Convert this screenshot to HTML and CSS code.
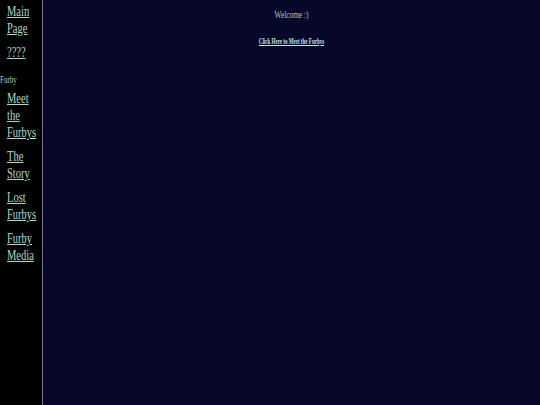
FILE: index.html
```html
<!DOCTYPE html>
<html>
<head>
<meta charset="utf-8">
<title>Furby</title>
<link rel="stylesheet" href="styles.css">
</head>
<body>
<div class="page">
  <nav class="sidebar">
    <a class="nav-link" href="#">Main Page</a>
    <a class="nav-link" href="#">????</a>
    <div class="nav-label">Furby</div>
    <a class="nav-link" href="#">Meet the Furbys</a>
    <a class="nav-link" href="#">The Story</a>
    <a class="nav-link" href="#">Lost Furbys</a>
    <a class="nav-link" href="#">Furby Media</a>
  </nav>
  <main class="content">
    <p class="welcome">Welcome :)</p>
    <p class="cta-row"><a class="cta" href="#">Click Here to Meet the Furbys</a></p>
  </main>
</div>
</body>
</html>
```

FILE: styles.css
```css
html, body {
  margin: 0;
  padding: 0;
  background: #07072a;
  overflow: hidden;
}

body {
  width: 540px;
  height: 405px;
  font-family: "Liberation Serif", "Times New Roman", serif;
}

.page {
  width: 540px;
  height: 405px;
  display: flex;
}

.sidebar {
  width: 42px;
  flex: none;
  background: #000;
  border-right: 1px solid #77779a;
  padding-top: 3px;
  display: flex;
  flex-direction: column;
  align-items: flex-start;
  overflow: hidden;
}

.nav-link {
  display: block;
  margin-left: 7px;
  margin-bottom: 7px;
  width: 48px;
  font-size: 15px;
  line-height: 17px;
  color: #a9dbc4;
  text-decoration: underline;
  transform: scaleX(0.7);
  transform-origin: 0 0;
}

.nav-label {
  width: 40px;
  font-size: 10px;
  line-height: 12px;
  color: #b4ccc0;
  margin-top: 6px;
  margin-bottom: 4px;
  transform: scaleX(0.7);
  transform-origin: 0 0;
}

.content {
  flex: 1;
  text-align: center;
  padding-top: 8px;
}

.welcome {
  margin: 0;
  font-size: 10.5px;
  line-height: 13px;
  color: #b0c2d0;
  transform: scaleX(0.7);
}

.cta-row {
  margin: 17px 0 0;
  font-size: 7.2px;
  line-height: 9px;
  transform: scaleX(0.7);
}

.cta {
  font-weight: bold;
  color: #c4e2e2;
  text-decoration: underline;
}
```
